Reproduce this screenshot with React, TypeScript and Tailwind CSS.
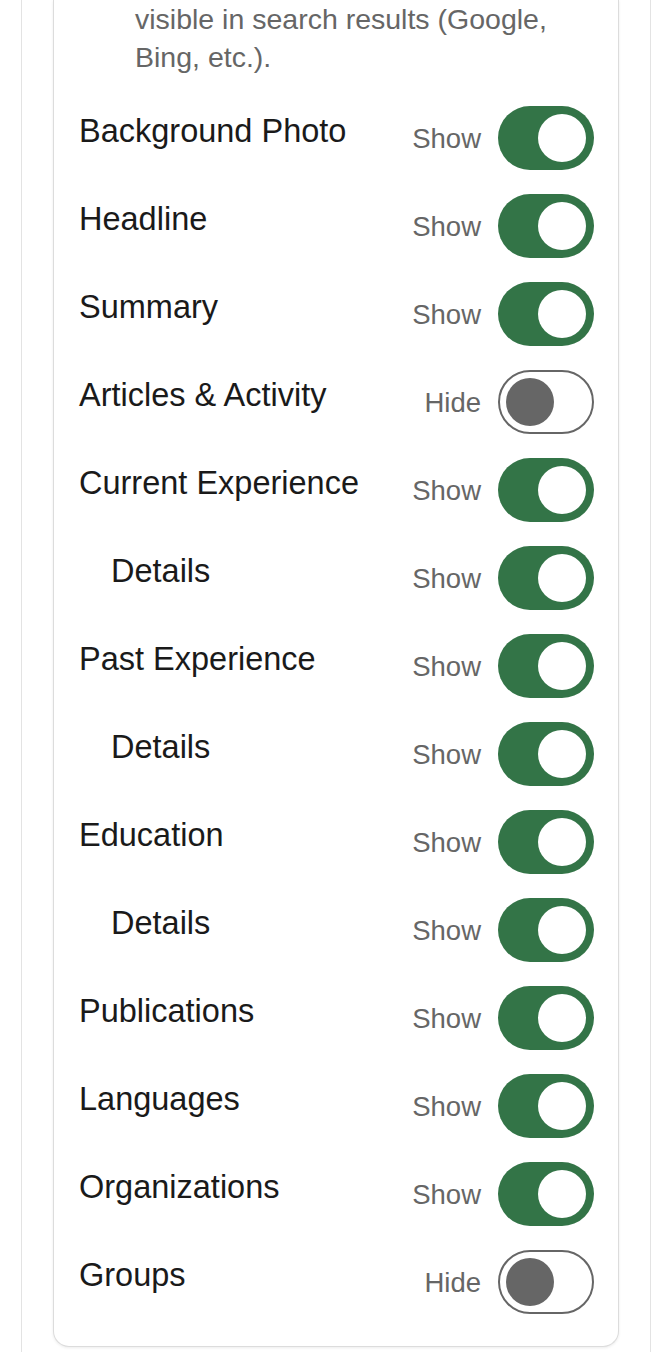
import React, { useState } from 'react';

type Row = { label: string; on: boolean; sub?: boolean };

const initialRows: Row[] = [
  { label: 'Background Photo', on: true },
  { label: 'Headline', on: true },
  { label: 'Summary', on: true },
  { label: 'Articles & Activity', on: false },
  { label: 'Current Experience', on: true },
  { label: 'Details', on: true, sub: true },
  { label: 'Past Experience', on: true },
  { label: 'Details', on: true, sub: true },
  { label: 'Education', on: true },
  { label: 'Details', on: true, sub: true },
  { label: 'Publications', on: true },
  { label: 'Languages', on: true },
  { label: 'Organizations', on: true },
  { label: 'Groups', on: false },
];

const Toggle: React.FC<{ on: boolean; onClick: () => void }> = ({ on, onClick }) => (
  <button
    onClick={onClick}
    className={
      on
        ? 'w-[96px] h-[64px] rounded-full bg-[#337447] flex items-center justify-end px-[8px] shrink-0'
        : 'w-[96px] h-[64px] rounded-full bg-white border-2 border-[#666666] flex items-center justify-start px-[6px] shrink-0'
    }
  >
    <span className={on ? 'block w-[48px] h-[48px] rounded-full bg-white' : 'block w-[48px] h-[48px] rounded-full bg-[#666666]'} />
  </button>
);

export default function App() {
  const [rows, setRows] = useState(initialRows);

  const flip = (i: number) =>
    setRows(rows.map((r, j) => (j === i ? { ...r, on: !r.on } : r)));

  return (
    <div className="min-h-[1352px] bg-white" style={{ fontFamily: '"Liberation Sans", Arial, sans-serif' }}>
      <div className="ml-[21px] w-[630px] min-h-[1352px] border-x border-[#e3e3e3] px-[31px]">
        <div className="bg-white border-x border-b border-[#dcdcdc] rounded-b-[16px] shadow-[0_1px_3px_rgba(0,0,0,0.08)] pl-[25px] pr-[24px] pb-[20px]">
          <p className="pl-[56px] text-[28.5px] leading-[38px] text-[#666666] mb-[18px]">
            visible in search results (Google,
            <br />
            Bing, etc.).
          </p>
          {rows.map((r, i) => (
            <div key={i} className="flex justify-between items-start py-[12px]">
              <span
                className={
                  r.sub
                    ? 'pl-[32px] pt-[6px] text-[32.5px] leading-[38px] text-[#1a1a1a]'
                    : 'pt-[6px] text-[32.5px] leading-[38px] text-[#1a1a1a]'
                }
              >
                {r.label}
              </span>
              <div className="flex items-center gap-[17px] h-[64px]">
                <span className="text-[27.5px] leading-[32px] text-[#666666] pt-[2px]">{r.on ? 'Show' : 'Hide'}</span>
                <Toggle on={r.on} onClick={() => flip(i)} />
              </div>
            </div>
          ))}
        </div>
      </div>
    </div>
  );
}
